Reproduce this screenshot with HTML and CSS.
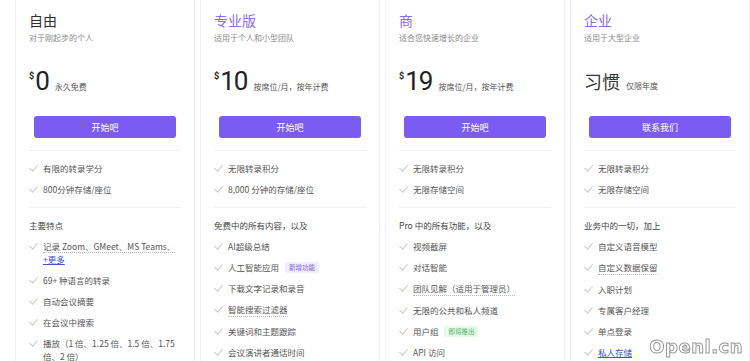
FILE: index.html
```html
<!DOCTYPE html>
<html>
<head>
    <meta charset="utf-8">
    <meta name="viewport" content="width=device-width, initial-scale=1">
    <title>价格</title>
    <link rel="stylesheet" href="styles.css">
</head>
<body>
    <div class="plans">
        <!-- 自由 -->
        <div class="plan">
            <h2 class="plan-name dark">自由</h2>
            <p class="plan-desc">对于刚起步的个人</p>
            <div class="price">
                <span class="cur">$</span><span class="amount">0</span><span class="per">永久免费</span>
            </div>
            <a href="#" class="btn">开始吧</a>
            <ul class="limits">
                <li>有限的转录学分</li>
                <li>800分钟存储/座位</li>
            </ul>
            <div class="features">
                <p class="feat-head">主要特点</p>
                <ul>
                    <li><span><span class="dotted">记录 Zoom、GMeet、MS Teams、</span><a href="#" class="more">+更多</a></span></li>
                    <li>69+ 种语言的转录</li>
                    <li>自动会议摘要</li>
                    <li>在会议中搜索</li>
                    <li>播放（1 倍、1.25 倍、1.5 倍、1.75 倍、2 倍）</li>
                </ul>
            </div>
        </div>

        <!-- 专业版 -->
        <div class="plan">
            <h2 class="plan-name">专业版</h2>
            <p class="plan-desc">适用于个人和小型团队</p>
            <div class="price">
                <span class="cur">$</span><span class="amount">10</span><span class="per">按席位/月，按年计费</span>
            </div>
            <a href="#" class="btn">开始吧</a>
            <ul class="limits">
                <li>无限转录积分</li>
                <li>8,000 分钟的存储/座位</li>
            </ul>
            <div class="features">
                <p class="feat-head">免费中的所有内容，以及</p>
                <ul>
                    <li>AI超级总结</li>
                    <li><span>人工智能应用 <span class="badge new">新增功能</span></span></li>
                    <li>下载文字记录和录音</li>
                    <li><span class="dotted">智能搜索过滤器</span></li>
                    <li>关键词和主题跟踪</li>
                    <li>会议演讲者通话时间</li>
                </ul>
            </div>
        </div>

        <!-- 商 -->
        <div class="plan">
            <h2 class="plan-name">商</h2>
            <p class="plan-desc">适合您快速增长的企业</p>
            <div class="price">
                <span class="cur">$</span><span class="amount">19</span><span class="per">按席位/月，按年计费</span>
            </div>
            <a href="#" class="btn">开始吧</a>
            <ul class="limits">
                <li>无限转录积分</li>
                <li>无限存储空间</li>
            </ul>
            <div class="features">
                <p class="feat-head">Pro 中的所有功能，以及</p>
                <ul>
                    <li>视频截屏</li>
                    <li>对话智能</li>
                    <li><span class="dotted">团队见解（适用于管理员）</span></li>
                    <li>无限的公共和私人频道</li>
                    <li><span>用户组 <span class="badge soon">即将推出</span></span></li>
                    <li>API 访问</li>
                </ul>
            </div>
        </div>

        <!-- 企业 -->
        <div class="plan">
            <h2 class="plan-name">企业</h2>
            <p class="plan-desc">适用于大型企业</p>
            <div class="price">
                <span class="amount word">习惯</span><span class="per">仅限年度</span>
            </div>
            <a href="#" class="btn">联系我们</a>
            <ul class="limits">
                <li>无限转录积分</li>
                <li>无限存储空间</li>
            </ul>
            <div class="features">
                <p class="feat-head">业务中的一切，加上</p>
                <ul>
                    <li>自定义语音模型</li>
                    <li><span class="dotted">自定义数据保留</span></li>
                    <li>入职计划</li>
                    <li>专属客户经理</li>
                    <li>单点登录</li>
                    <li><a href="#" class="more">私人存储</a></li>
                </ul>
            </div>
        </div>
    </div>

    <div class="watermark">Openl.cn</div>
</body>
</html>
```

FILE: styles.css
```css
* {
    box-sizing: border-box;
}
body {
    margin: 0;
    background: #fff;
    font-family: "Noto Sans CJK SC", "Noto Sans", sans-serif;
    color: #444;
    overflow: hidden;
}
ul {
    padding: 0;
    margin: 0;
    list-style: none;
}
p, h2 {
    margin: 0;
}

.plans {
    display: grid;
    grid-template-columns: repeat(4, 1fr);
    gap: 5px;
    padding-left: 15px;
}
.plan {
    border-left: 1px solid #f0f0f0;
    border-right: 1px solid #f0f0f0;
    padding: 9px 13px 0;
    display: flex;
    flex-direction: column;
}

.plan-name {
    font-size: 14px;
    line-height: 22px;
    font-weight: 400;
    color: #8a6cee;
}
.plan-name.dark {
    color: #2e2e2e;
}
.plan-desc {
    margin-top: 1px;
    font-size: 8px;
    line-height: 12px;
    color: #8a8a8a;
}

.price {
    margin-top: 22px;
    height: 30px;
    display: flex;
    align-items: baseline;
}
.cur {
    align-self: flex-start;
    font-family: Roboto, sans-serif;
    font-size: 9px;
    font-weight: 700;
    color: #222;
    margin-top: 5px;
    margin-right: 1px;
}
.amount {
    font-family: Roboto, sans-serif;
    font-size: 26px;
    line-height: 30px;
    letter-spacing: -1px;
    color: #222;
}
.amount.word {
    font-family: "Noto Sans CJK SC", sans-serif;
    font-size: 18px;
    letter-spacing: 0;
    color: #333;
}
.per {
    margin-left: 6px;
    font-size: 8px;
    color: #555;
}

.btn {
    margin: 20px 5px 0;
    height: 22px;
    border-radius: 3px;
    background: #7b5cf2;
    color: #fff;
    font-size: 9px;
    display: flex;
    align-items: center;
    justify-content: center;
    text-decoration: none;
}

.limits {
    margin-top: 12px;
    border-top: 1px solid #f2f2f2;
    padding: 7px 0;
}
.features {
    border-top: 1px solid #f0f0f0;
    padding-top: 7px;
}
.feat-head {
    font-size: 8.5px;
    line-height: 21px;
    color: #444;
}

.limits li,
.features li {
    display: flex;
    align-items: flex-start;
    padding: 4px 0;
    font-size: 8.5px;
    line-height: 13px;
    color: #555;
}
.limits li::before,
.features li::before {
    content: "";
    flex: none;
    width: 4px;
    height: 7px;
    margin: 1px 7px 0 2px;
    border-right: 1px solid #c8c8c8;
    border-bottom: 1px solid #c8c8c8;
    transform: rotate(40deg);
}

.dotted {
    border-bottom: 1px dotted #bbb;
}
.more {
    color: #3b4fd8;
    text-decoration: underline;
}

.badge {
    display: inline-block;
    font-size: 6.5px;
    line-height: 11px;
    padding: 0 4px;
    margin-left: 4px;
    border-radius: 2px;
    vertical-align: 1px;
}
.badge.new {
    background: #f1edfd;
    color: #7d62e8;
}
.badge.soon {
    background: #e6f8e8;
    color: #4bb35a;
}

.watermark {
    position: fixed;
    right: 7px;
    bottom: 4px;
    font-family: "DejaVu Sans", sans-serif;
    font-size: 18px;
    font-weight: 700;
    color: #fff;
    -webkit-text-stroke: 1px #999;
    letter-spacing: 0.5px;
}
```
